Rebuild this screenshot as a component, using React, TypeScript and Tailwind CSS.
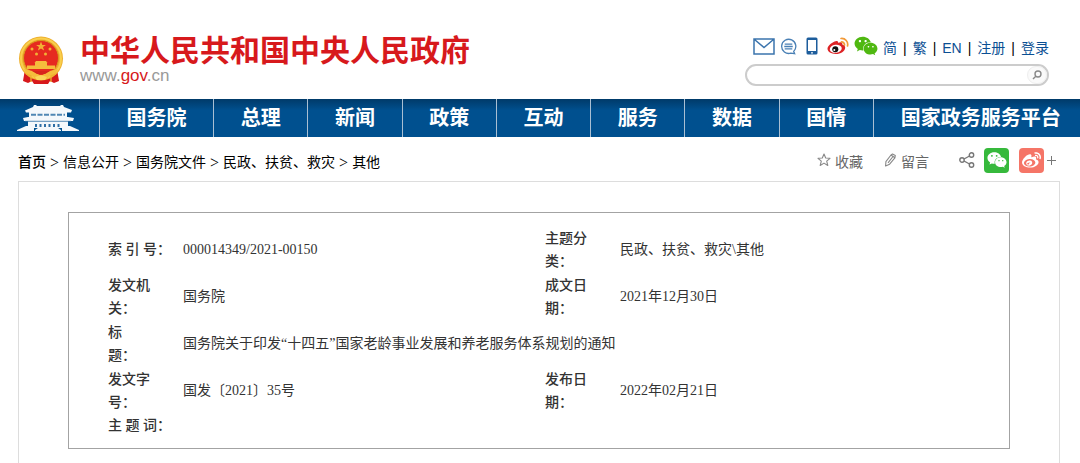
import { Fragment } from "react";
import { FaWeibo, FaWeixin } from "react-icons/fa";

const navItems = ["国务院", "总理", "新闻", "政策", "互动", "服务", "数据", "国情"];

const crumbs = ["首页", "信息公开", "国务院文件", "民政、扶贫、救灾", "其他"];

const userLinks = ["简", "繁", "EN", "注册", "登录"];

function Emblem() {
  return (
    <svg viewBox="0 0 46 48" className="h-12 w-[46px]" aria-hidden="true">
      <path d="M7 33 L5 45 L10 47 L14 45 L16 48 L30 48 L32 45 L36 47 L41 45 L39 33 Z" fill="#d7191c" />
      <circle cx="23" cy="22.500" r="22" fill="#eeb02f" />
      <circle cx="23" cy="22.500" r="20" fill="none" stroke="#f9cf4c" strokeWidth="2" />
      <circle cx="23" cy="22" r="17.500" fill="#e62a20" stroke="#d99a1d" strokeWidth="1" />
      <path d="M23 5.500l1.300 3.400h3.600l-2.900 2.100 1.100 3.500-3.100-2.100-3.100 2.100 1.100-3.500-2.900-2.100h3.600z" fill="#f2b134" />
      <circle cx="14" cy="13" r="1.500" fill="#f2b134" />
      <circle cx="32" cy="13" r="1.500" fill="#f2b134" />
      <circle cx="18.500" cy="18" r="1.500" fill="#f2b134" />
      <circle cx="27.500" cy="18" r="1.500" fill="#f2b134" />
      <path d="M18 25h10l1.500 2h-13zM17 27h12v2.500H17zM9 29.500h28v3.500H9z" fill="#f5bd3c" />
      <path d="M6 33c6 2 9 1 12 4l5 3 5-3c3-3 6-2 12-4l-3 6c-4 0-6 1-8 4H17c-2-3-4-4-8-4z" fill="#f5bd3c" />
      <path d="M14 35h18l-5 3h-8z" fill="#d7261c" />
      <path d="M17 41l6-2 6 2-2 3h-8z" fill="#fbd65a" />
      <path d="M8 38l5 2v6M38 38l-5 2v6" fill="none" stroke="#eeb02f" strokeWidth="1.300" />
    </svg>
  );
}

function Gate() {
  return (
    <svg viewBox="0 0 62 26" className="h-[26px] w-[62px]" aria-hidden="true">
      <g fill="#f4f8fb">
        <path d="M17 0h2l1 1h23l1-1h2l1 2 8 3-1 2.500H9L8 5.500 16 2z" />
        <path d="M12 7h38v6H12z" />
        <path d="M6 13l5-1h40l6 1-1 3H7z" />
        <path d="M11 16h40v7H11z" />
        <path d="M0 26v-1l9-4h8v5zM62 26v-1l-9-4h-8v5z" />
        <path d="M21 23h20l3 2v1H18v-1z" />
      </g>
      <path d="M14 9.800h34" stroke="#4f87b4" strokeWidth="2" strokeDasharray="5 1.500" />
      <path d="M18 20.500h26" stroke="#2f6fa5" strokeWidth="3" strokeDasharray="2 2.500" />
      <path d="M8 16.300h46" stroke="#2f6fa5" strokeWidth="0.800" />
    </svg>
  );
}

function MailIcon() {
  return (
    <svg viewBox="0 0 22 17" className="h-[17px] w-[22px]" fill="none" stroke="#3b74ad" strokeWidth="1.500">
      <path d="M1 1h20v15H1zM1.500 1.500L11 9.500l9.500-8" />
    </svg>
  );
}

function ChatIcon() {
  return (
    <svg viewBox="0 0 18 18" className="h-[17px] w-[17px]" fill="none" stroke="#4a80b5" strokeWidth="1.400">
      <path d="M14.500 14.200A7.500 7.500 0 1 0 11.500 16l4 .5z" />
      <path d="M5 6.500h8M4.500 9h9M5 11.500h8" />
    </svg>
  );
}

function PhoneIcon() {
  return (
    <svg viewBox="0 0 12 18" className="h-[18px] w-3">
      <rect x="0.500" y="0.500" width="11" height="17" rx="1.500" fill="#1d5d9c" />
      <rect x="2" y="3" width="8" height="11" fill="#fff" />
      <circle cx="6" cy="15.800" r="0.900" fill="#fff" />
    </svg>
  );
}

function WeiboIcon() {
  return (
    <svg viewBox="0 0 22 18" className="h-[18px] w-[22px]">
      <path d="M7.500 4.500c2-1 3.800-.8 3.600 1.300 2.500-1 4.700-.8 4.200 1.600 2 .6 3 1.700 2.900 3.300-.2 3.500-4.500 6.300-9.300 6.300S.500 14.700.500 11.800 4 6.200 7.500 4.500z" fill="#dd2326" />
      <ellipse cx="8.800" cy="11.800" rx="6" ry="4" fill="#fff" transform="rotate(-8 8.800 11.800)" />
      <circle cx="8.300" cy="12.200" r="3" fill="#111" />
      <circle cx="7.300" cy="13" r="1" fill="#fff" />
      <path d="M14 1.500a6 6 0 0 1 6.500 7.500M14.500 4.800a3 3 0 0 1 3 3.400" fill="none" stroke="#f29a38" strokeWidth="1.700" strokeLinecap="round" />
    </svg>
  );
}

function ShareIcon() {
  return (
    <svg viewBox="0 0 16 16" className="h-4 w-4" fill="none" stroke="#777" strokeWidth="1.400">
      <circle cx="3" cy="8" r="2.200" />
      <circle cx="12.500" cy="3" r="2.200" />
      <circle cx="12.500" cy="13" r="2.200" />
      <path d="M5 7l5.500-3M5 9l5.500 3" />
    </svg>
  );
}

function StarIcon() {
  return (
    <svg viewBox="0 0 14 14" className="h-3.5 w-3.5" fill="none" stroke="#888" strokeWidth="1.100" strokeLinejoin="round">
      <path d="M7 1l1.700 4 4.300.3-3.300 2.800 1.100 4.400L7 10.100l-3.800 2.400 1.100-4.400L1 5.300 5.300 5z" />
    </svg>
  );
}

function PencilIcon() {
  return (
    <svg viewBox="0 0 14 14" className="h-3.5 w-3.5" fill="none" stroke="#888" strokeWidth="1.100" strokeLinejoin="round">
      <path d="M9.500 1l2.800 1.500-.4 2.300-5.300 6.400-4 1.800.3-4.300L8 2zM8 2l3.900 2.800M10 3.500L5 9.800" />
    </svg>
  );
}

export default function App() {
  return (
    <div className="bg-white font-['Liberation_Sans','Noto_Sans_CJK_SC',sans-serif] text-sm text-[#333]">
      {/* HEADER */}
      <header className="flex justify-between pt-9 pr-[31px] pb-[13px] pl-[18px]">
        <a href="#" className="flex gap-4">
          <Emblem />
          <div>
            <h1 className="text-[30px] leading-[30px] font-bold whitespace-nowrap text-[#d7191c]">
              中华人民共和国中央人民政府
            </h1>
            <p className="text-[17px] leading-5 text-[#999]">
              www.<span className="text-[#d7191c]">gov</span>.cn
            </p>
          </div>
        </a>

        <div className="w-[304px]">
          <div className="flex h-5 items-center justify-between pl-2">
            <div className="flex items-center gap-[5px]">
              <a href="#" aria-label="邮箱"><MailIcon /></a>
              <a href="#" aria-label="消息"><ChatIcon /></a>
              <a href="#" aria-label="客户端" className="px-1"><PhoneIcon /></a>
              <a href="#" aria-label="微博"><WeiboIcon /></a>
              <a href="#" aria-label="微信"><FaWeixin className="h-[22px] w-6 text-[#4fb811]" /></a>
            </div>
            <div className="flex items-center gap-1.5 pt-1 leading-5 whitespace-nowrap text-[#0b4f93]">
              {userLinks.map((text, i) => (
                <Fragment key={text}>
                  {i > 0 && <span className="text-black">|</span>}
                  <a href="#">{text}</a>
                </Fragment>
              ))}
            </div>
          </div>
          <form className="mt-2 flex h-[22px] items-center rounded-full border-2 border-[#ccc]">
            <input type="text" aria-label="搜索" className="h-full min-w-0 flex-1 px-3 outline-none" />
            <button type="button" aria-label="搜索" className="flex h-[18px] w-5 items-center justify-center rounded-full border border-[#eee] bg-[#fafafa]">
              <svg viewBox="0 0 10 10" className="h-2.5 w-2.5" fill="none" stroke="#888" strokeWidth="1.400">
                <circle cx="6" cy="4" r="3" />
                <path d="M3.800 6.200L1 9" />
              </svg>
            </button>
          </form>
        </div>
      </header>

      {/* NAV */}
      <nav className="flex h-[38px] overflow-hidden bg-linear-to-b from-[#003a69] via-[#00508f] via-30% to-[#00508f] text-xl font-bold whitespace-nowrap text-white">
        <a href="#" aria-label="首页" className="flex w-[99px] shrink-0 items-center pl-[17px]">
          <Gate />
        </a>
        {navItems.map((item) => (
          <a key={item} href="#" className="flex flex-auto items-center justify-center border-l border-[#a9bfd3] px-[26px]">
            {item}
          </a>
        ))}
        <a href="#" className="flex flex-auto items-center border-l border-[#a9bfd3] pr-[18px] pl-[27px]">
          国家政务服务平台
        </a>
      </nav>

      <div className="pr-5 pl-[18px] font-['Liberation_Serif','Noto_Sans_CJK_SC',serif]">
        {/* BREADCRUMB + SHARE */}
        <div className="flex h-11 items-center justify-between">
          <div className="flex items-center gap-1 pt-2 leading-5 text-black">
            {crumbs.map((text, i) => (
              <Fragment key={text}>
                {i > 0 && <span className="text-base leading-5">&gt;</span>}
                <a href="#" className={i === 0 ? "font-medium" : ""}>{text}</a>
              </Fragment>
            ))}
          </div>
          <div className="flex items-center pt-0.5 pr-1 text-[#666]">
            <button type="button" className="mr-5 flex items-center gap-1"><StarIcon /><span className="pt-1.5">收藏</span></button>
            <button type="button" className="mr-[30px] flex items-center gap-1"><PencilIcon /><span className="pt-1.5">留言</span></button>
            <button type="button" aria-label="分享" className="mr-[9px]"><ShareIcon /></button>
            <button type="button" aria-label="分享到微信" className="mr-[10px] flex h-[25px] w-[25px] items-center justify-center rounded-sm bg-[#36b93c] text-white">
              <FaWeixin className="h-5 w-5" />
            </button>
            <button type="button" aria-label="分享到微博" className="mr-[3px] flex h-[25px] w-[25px] items-center justify-center rounded-sm bg-[#f57567] text-white">
              <FaWeibo className="h-[19px] w-[19px]" />
            </button>
            <button type="button" aria-label="更多">
              <svg viewBox="0 0 9 9" className="h-[9px] w-[9px]" stroke="#777">
                <path d="M4.500 0v9M0 4.500h9" />
              </svg>
            </button>
          </div>
        </div>

        {/* DOCUMENT INFO */}
        <main className="border border-b-0 border-[#ddd] px-[49px] pt-[30px] pb-4">
          <div className="border border-[#a3a3a3] pt-[13px] pb-[11px] pl-[39px]">
            <table className="w-full table-fixed text-left leading-[23px]">
              <colgroup>
                <col className="w-[75px]" />
                <col className="w-[362px]" />
                <col className="w-[75px]" />
                <col />
              </colgroup>
              <tbody>
                <tr className="h-[47px]">
                  <th className="font-medium whitespace-nowrap">索 引 号：</th>
                  <td>000014349/2021-00150</td>
                  <th className="font-medium">主题分<br />类：</th>
                  <td>民政、扶贫、救灾\其他</td>
                </tr>
                <tr className="h-[47px]">
                  <th className="font-medium">发文机<br />关：</th>
                  <td>国务院</td>
                  <th className="font-medium">成文日<br />期：</th>
                  <td>2021年12月30日</td>
                </tr>
                <tr className="h-[47px]">
                  <th className="font-medium">标<br />题：</th>
                  <td colSpan={3}>国务院关于印发“十四五”国家老龄事业发展和养老服务体系规划的通知</td>
                </tr>
                <tr className="h-[47px]">
                  <th className="font-medium">发文字<br />号：</th>
                  <td>国发〔2021〕35号</td>
                  <th className="font-medium">发布日<br />期：</th>
                  <td>2022年02月21日</td>
                </tr>
                <tr>
                  <th className="font-medium whitespace-nowrap">主 题 词：</th>
                  <td colSpan={3}></td>
                </tr>
              </tbody>
            </table>
          </div>
        </main>
      </div>
    </div>
  );
}
